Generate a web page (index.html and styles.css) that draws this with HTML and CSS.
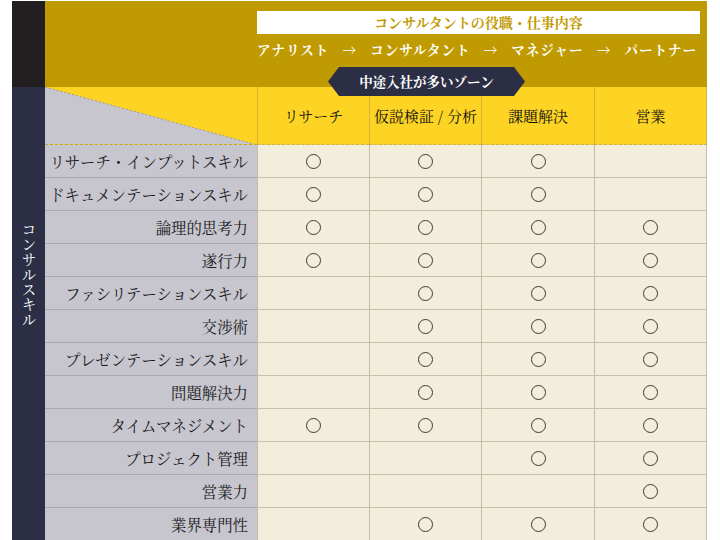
FILE: index.html
```html
<!DOCTYPE html>
<html lang="ja">
<head>
<meta charset="utf-8">
<link rel="stylesheet" href="styles.css">
</head>
<body>
<div class="page">
  <div class="side">
    <div class="side-top"></div>
    <div class="side-body"><span class="side-label">コンサルスキル</span></div>
  </div>
  <div class="main">
    <div class="head">
      <div class="title">コンサルタントの役職・仕事内容</div>
      <div class="steps">
        <span>アナリスト</span><span>→</span><span>コンサルタント</span><span>→</span><span>マネジャー</span><span>→</span><span>パートナー</span>
      </div>
      <div class="zone">中途入社が多いゾーン</div>
    </div>
    <div class="grid">
      <div class="corner">
        <svg width="212" height="58" viewBox="0 0 212 58"><polygon points="0,0 212,58 0,58" fill="#c7c6cf"/><line x1="0" y1="0" x2="212" y2="58" stroke="#9a9aa0" stroke-width="1" stroke-dasharray="2,2"/></svg>
      </div>
      <div class="hc">リサーチ</div>
      <div class="hc">仮説検証 / 分析</div>
      <div class="hc">課題解決</div>
      <div class="hc last">営業</div>

      <div class="lab">リサーチ・インプットスキル</div><div class="c"><i class="o"></i></div><div class="c"><i class="o"></i></div><div class="c"><i class="o"></i></div><div class="c last"></div>
      <div class="lab">ドキュメンテーションスキル</div><div class="c"><i class="o"></i></div><div class="c"><i class="o"></i></div><div class="c"><i class="o"></i></div><div class="c last"></div>
      <div class="lab">論理的思考力</div><div class="c"><i class="o"></i></div><div class="c"><i class="o"></i></div><div class="c"><i class="o"></i></div><div class="c last"><i class="o"></i></div>
      <div class="lab">遂行力</div><div class="c"><i class="o"></i></div><div class="c"><i class="o"></i></div><div class="c"><i class="o"></i></div><div class="c last"><i class="o"></i></div>
      <div class="lab">ファシリテーションスキル</div><div class="c"></div><div class="c"><i class="o"></i></div><div class="c"><i class="o"></i></div><div class="c last"><i class="o"></i></div>
      <div class="lab">交渉術</div><div class="c"></div><div class="c"><i class="o"></i></div><div class="c"><i class="o"></i></div><div class="c last"><i class="o"></i></div>
      <div class="lab">プレゼンテーションスキル</div><div class="c"></div><div class="c"><i class="o"></i></div><div class="c"><i class="o"></i></div><div class="c last"><i class="o"></i></div>
      <div class="lab">問題解決力</div><div class="c"></div><div class="c"><i class="o"></i></div><div class="c"><i class="o"></i></div><div class="c last"><i class="o"></i></div>
      <div class="lab">タイムマネジメント</div><div class="c"><i class="o"></i></div><div class="c"><i class="o"></i></div><div class="c"><i class="o"></i></div><div class="c last"><i class="o"></i></div>
      <div class="lab">プロジェクト管理</div><div class="c"></div><div class="c"></div><div class="c"><i class="o"></i></div><div class="c last"><i class="o"></i></div>
      <div class="lab">営業力</div><div class="c"></div><div class="c"></div><div class="c"></div><div class="c last"><i class="o"></i></div>
      <div class="lab">業界専門性</div><div class="c"></div><div class="c"><i class="o"></i></div><div class="c"><i class="o"></i></div><div class="c last"><i class="o"></i></div>
    </div>
  </div>
</div>
</body>
</html>
```
FILE: styles.css
```css
html, body {
  margin: 0;
  padding: 0;
  background: #ffffff;
}
body {
  font-family: "Noto Serif CJK JP", "Noto Sans CJK JP", serif;
  overflow: hidden;
}
.page {
  display: flex;
  margin-left: 12px;
  padding-top: 1px;
  width: 695px;
  height: 560px;
}
.side {
  width: 33px;
  display: flex;
  flex-direction: column;
}
.side-top {
  height: 86px;
  background: #231f20;
}
.side-body {
  flex: 1;
  background: #2b2e44;
  display: flex;
  justify-content: center;
  padding-top: 135px;
}
.side-label {
  writing-mode: vertical-rl;
  color: #ffffff;
  font-size: 15px;
  line-height: 16px;
  height: 112px;
}
.main {
  width: 662px;
  display: flex;
  flex-direction: column;
}
.head {
  position: relative;
  height: 86px;
  background: #bf9a00;
  padding-left: 212px;
  padding-top: 10px;
  box-sizing: border-box;
}
.title {
  width: 443px;
  height: 23px;
  background: #ffffff;
  color: #bf9a00;
  font-weight: bold;
  font-size: 14px;
  line-height: 23px;
  text-align: center;
}
.steps {
  display: flex;
  justify-content: space-between;
  width: 440px;
  margin-top: 4px;
  color: #ffffff;
  font-weight: bold;
  font-size: 13.5px;
  line-height: 22px;
  letter-spacing: 1px;
}
.zone {
  position: absolute;
  left: 283px;
  top: 66px;
  width: 197px;
  height: 29px;
  background: #2b2e44;
  color: #ffffff;
  font-weight: bold;
  font-size: 13.5px;
  line-height: 29px;
  text-align: center;
  clip-path: polygon(11px 0, 186px 0, 197px 50%, 186px 100%, 11px 100%, 0 50%);
  z-index: 2;
}
.grid {
  display: grid;
  grid-template-columns: 212px 112px 112px 113px 113px;
  grid-template-rows: 58px repeat(12, 33px);
}
.corner {
  background: #fdd423;
  border-bottom: 1px dashed #b0a070;
  box-sizing: border-box;
  overflow: hidden;
}
.corner svg {
  display: block;
}
.hc {
  background: #fdd423;
  border-left: 1px solid #d4b23c;
  border-bottom: 1px dashed #c9b067;
  box-sizing: border-box;
  display: flex;
  align-items: center;
  justify-content: center;
  font-size: 15px;
  color: #111111;
}
.hc.last {
  border-right: 1px solid #d4b23c;
}
.lab {
  background: #c7c6cf;
  border-bottom: 1px solid #a9a8b0;
  box-sizing: border-box;
  display: flex;
  align-items: center;
  justify-content: flex-end;
  padding-right: 9px;
  font-size: 15.4px;
  color: #1a1a1a;
  white-space: nowrap;
}
.c {
  background: #f3eddc;
  border-left: 1px solid #c4bba8;
  border-bottom: 1px solid #c9c0ac;
  box-sizing: border-box;
  display: flex;
  align-items: center;
  justify-content: center;
}
.c.last {
  border-right: 1px solid #c4bba8;
}
.o {
  display: block;
  width: 15px;
  height: 15px;
  border: 1px solid #3a3a3a;
  border-radius: 50%;
  box-sizing: border-box;
}
```
